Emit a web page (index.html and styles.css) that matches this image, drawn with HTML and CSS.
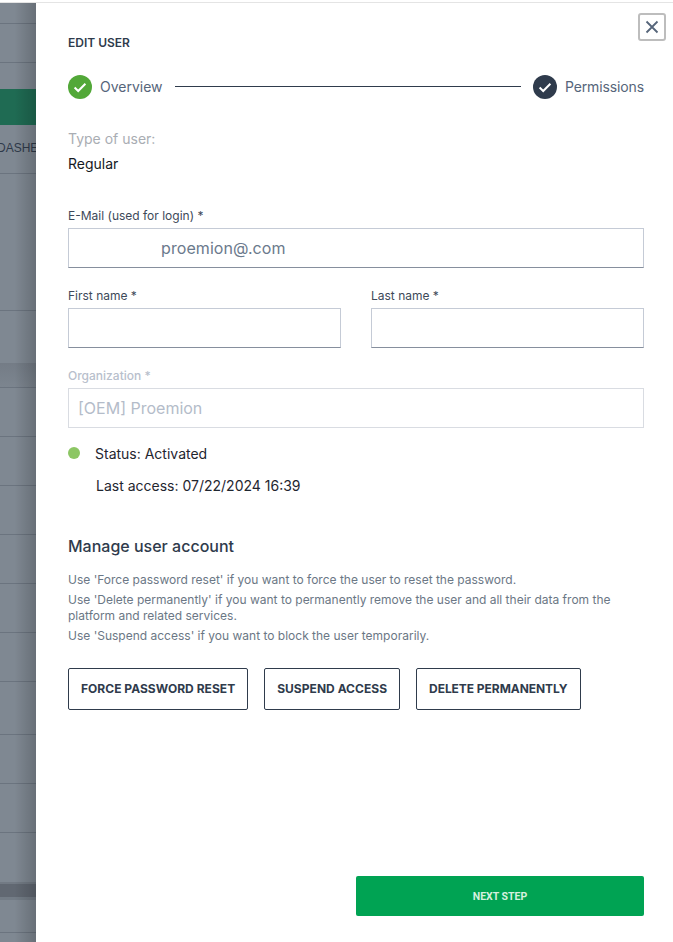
FILE: index.html
```html
<!DOCTYPE html>
<html lang="en">
<head>
    <meta charset="UTF-8">
    <meta name="viewport" content="width=device-width, initial-scale=1.0">
    <title>Edit user</title>
    <link rel="stylesheet" href="styles.css">
</head>
<body>
    <div class="topline"></div>
    <div class="page">
        <!-- Table behind the drawer -->
        <div class="backdrop">
            <div class="row row-21"></div>
            <div class="row row-39"></div>
            <div class="spacer-26"></div>
            <div class="green-band"></div>
            <div class="row row-49 dash-row"><span>DASHE</span></div>
            <div class="row row-137"></div>
            <div class="shade-row"></div>
            <div class="row row-49"></div>
            <div class="row row-49"></div>
            <div class="row row-49"></div>
            <div class="row row-49"></div>
            <div class="row row-49"></div>
            <div class="row row-49"></div>
            <div class="row row-53"></div>
            <div class="row row-49"></div>
            <div class="row row-49"></div>
            <div class="spacer-49"></div>
            <div class="dark-band"></div>
            <div class="row row-33"></div>
        </div>

        <!-- Drawer -->
        <div class="drawer">
            <button class="close" aria-label="Close">
                <svg width="14" height="14" viewBox="0 0 14 14"><path d="M1.5 1.5 12.5 12.5M12.5 1.5 1.5 12.5" stroke="#56657a" stroke-width="1.8" fill="none"/></svg>
            </button>

            <h1>EDIT USER</h1>

            <div class="stepper">
                <span class="step-icon done">
                    <svg width="24" height="24" viewBox="0 0 24 24"><path d="M6.6 12.6 10.2 16 17.4 8.8" stroke="#fff" stroke-width="2" fill="none"/></svg>
                </span>
                <span class="step-name">Overview</span>
                <span class="step-line"></span>
                <span class="step-icon current">
                    <svg width="24" height="24" viewBox="0 0 24 24"><path d="M6.6 12.6 10.2 16 17.4 8.8" stroke="#fff" stroke-width="2" fill="none"/></svg>
                </span>
                <span class="step-name step-last">Permissions</span>
            </div>

            <div class="user-type">
                <div class="type-label">Type of user:</div>
                <div class="type-value">Regular</div>
            </div>

            <div class="field email-field">
                <label for="email">E-Mail (used for login) *</label>
                <input id="email" class="email-input" type="text" value="proemion@.com">
            </div>

            <div class="name-row">
                <div class="field">
                    <label for="first">First name *</label>
                    <input id="first" type="text">
                </div>
                <div class="field">
                    <label for="last">Last name *</label>
                    <input id="last" type="text">
                </div>
            </div>

            <div class="field org-field">
                <label for="org">Organization *</label>
                <input id="org" type="text" value="[OEM] Proemion" disabled>
            </div>

            <div class="status"><span class="dot"></span>Status: Activated</div>
            <div class="last-access">Last access: 07/22/2024 16:39</div>

            <h2>Manage user account</h2>
            <div class="help">
                <p>Use 'Force password reset' if you want to force the user to reset the password.</p>
                <p>Use 'Delete permanently' if you want to permanently remove the user and all their data from the platform and related services.</p>
                <p>Use 'Suspend access' if you want to block the user temporarily.</p>
            </div>

            <div class="actions">
                <button class="outline">FORCE PASSWORD RESET</button>
                <button class="outline">SUSPEND ACCESS</button>
                <button class="outline outline-last">DELETE PERMANENTLY</button>
            </div>

            <div class="footer">
                <button class="next">NEXT STEP</button>
            </div>
        </div>
    </div>
</body>
</html>
```

FILE: styles.css
```css
* { box-sizing: border-box; }
html, body {
    margin: 0;
    padding: 0;
    height: 942px;
    overflow: hidden;
    background-color: #fff;
    font-family: 'Inter', sans-serif;
    color: #2f3b4c;
}
.topline {
    height: 3px;
    background-color: #fff;
    border-bottom: 1px solid #e4e4e4;
}
.page {
    display: flex;
    height: 939px;
}

/* background table, dimmed */
.backdrop {
    position: relative;
    flex: 0 0 36px;
    overflow: hidden;
    background-color: #7f8892;
}
.backdrop::after {
    content: "";
    position: absolute;
    inset: 0;
    background: linear-gradient(to right, rgba(0,0,0,0) 40%, rgba(0,0,0,0.18) 100%);
}
.row { border-bottom: 1px solid #6b747f; }
.row-21 { height: 21px; }
.row-39 { height: 39px; }
.row-33 { height: 33px; }
.row-49 { height: 49px; }
.row-53 { height: 53px; }
.row-137 { height: 137px; }
.spacer-26 { height: 26px; }
.spacer-49 { height: 49px; }
.green-band {
    height: 36px;
    background-color: #1f6b53;
}
.dash-row {
    display: flex;
    align-items: center;
    padding-bottom: 2px;
    white-space: nowrap;
    font-family: 'Liberation Sans', sans-serif;
    font-size: 12px;
    color: #2f3a4a;
}
.dash-row span { margin-left: -3px; }
.shade-row {
    height: 77px;
    background: linear-gradient(to bottom, #7f8892 0, #7f8892 52px, #747c86 52px, #7c858f 76px, #6b747f 76px);
}
.dark-band {
    height: 18px;
    border-top: 2px solid #727a84;
    border-bottom: 3px solid #737c86;
    background-color: #616872;
}

/* drawer */
.drawer {
    position: relative;
    flex: 1;
    min-width: 0;
    padding: 0 29px 0 32px;
    background-color: #fff;
}
.close {
    position: absolute;
    top: 10px;
    right: 7px;
    width: 28px;
    height: 28px;
    padding: 0;
    display: flex;
    align-items: center;
    justify-content: center;
    background: #fff;
    border: 2px solid #bdbdbd;
    border-radius: 3px;
}
h1 {
    margin: 0;
    padding-top: 33px;
    font-size: 12px;
    line-height: 14px;
    font-weight: 600;
    color: #2f3b4c;
}
.stepper {
    display: flex;
    align-items: center;
    margin-top: 25px;
    height: 24px;
}
.step-icon {
    flex: 0 0 24px;
    width: 24px;
    height: 24px;
    border-radius: 50%;
}
.step-icon svg { display: block; }
.done { background-color: #52a838; }
.current { background-color: #2f3b4c; }
.step-name {
    margin-left: 8px;
    padding-bottom: 2px;
    font-size: 14px;
    color: #56657a;
}
.step-last { letter-spacing: -0.12px; }
.step-line {
    flex: 1;
    height: 1px;
    margin: 0 12px;
    background-color: #2f3b4c;
    transform: translateY(-1px);
}
.user-type { margin-top: 31px; }
.type-label {
    font-size: 14px;
    line-height: 18px;
    color: #a9adb3;
}
.type-value {
    margin-top: 7px;
    font-size: 14px;
    line-height: 18px;
    color: #15191f;
}
.field label {
    display: block;
    margin-bottom: 5px;
    font-size: 12px;
    line-height: 14px;
    color: #3d4959;
}
.field input {
    display: block;
    width: 100%;
    height: 40px;
    padding: 0 9px;
    font-family: 'Inter', sans-serif;
    font-size: 16px;
    color: #6b7a8c;
    background-color: #fff;
    border: 1px solid #c5cbd6;
    border-bottom-color: #868f9d;
    border-radius: 0;
    outline: none;
}
.email-field { margin-top: 36px; }
.field .email-input { padding-left: 92px; letter-spacing: 0.08px; }
.name-row {
    display: grid;
    grid-template-columns: 273px 273px;
    justify-content: space-between;
    margin-top: 21px;
}
.org-field { margin-top: 21px; }
.org-field label { color: #b8c0cc; font-weight: 500; }
.field input:disabled {
    color: #b4bcc9;
    border-color: #d9dce2;
}
.status {
    display: flex;
    align-items: center;
    margin-top: 16px;
    height: 18px;
    font-size: 14px;
    color: #1f2630;
}
.dot {
    width: 12px;
    height: 12px;
    margin-right: 15px;
    border-radius: 50%;
    background-color: #8cc664;
}
.last-access {
    margin-top: 15px;
    margin-left: 28px;
    font-size: 14px;
    line-height: 18px;
    color: #1f2630;
}
h2 {
    margin: 41px 0 0;
    font-size: 16px;
    line-height: 20px;
    font-weight: 500;
    color: #2f3b4c;
}
.help {
    margin-top: 16px;
    font-size: 12px;
    line-height: 16px;
    color: #6b7785;
}
.help p { margin: 0 0 4px; }
.actions {
    display: flex;
    gap: 16px;
    margin-top: 24px;
}
.outline {
    height: 42px;
    padding: 0 12px 2px;
    font-family: 'Inter', sans-serif;
    font-size: 12px;
    font-weight: 700;
    letter-spacing: 0.03px;
    color: #2f3b4c;
    background-color: #fff;
    border: 1px solid #2f3b4c;
    border-radius: 2px;
}
.outline-last { letter-spacing: -0.05px; }
.footer {
    display: flex;
    justify-content: flex-end;
    margin-top: 166px;
}
.next {
    width: 288px;
    height: 40px;
    font-family: 'Roboto', sans-serif;
    font-size: 10.5px;
    font-weight: 700;
    color: #d5f0df;
    background-color: #00a353;
    border: none;
    border-radius: 2px;
}
```
